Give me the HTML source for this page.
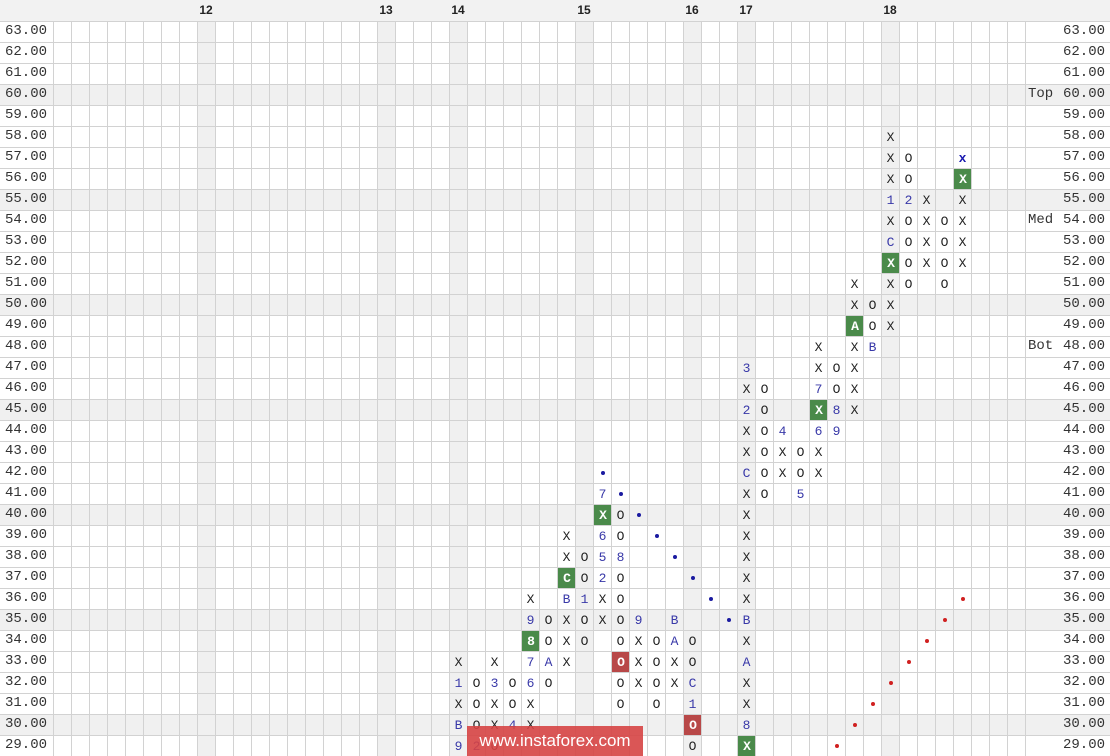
<!DOCTYPE html>
<html><head><meta charset="utf-8"><style>
*{margin:0;padding:0;box-sizing:border-box}
body{width:1110px;height:756px;overflow:hidden;background:#fff;position:relative;font-family:"Liberation Mono",monospace;color:#222}
.hdr{position:absolute;left:0;top:0;width:1110px;height:21px;background:#f2f2f2}
.hl{position:absolute;top:3px;font:bold 12px "Liberation Sans",sans-serif;width:18px;text-align:center}
.rs{position:absolute;left:0;width:1110px;height:21px;background:#f0f0f0}
.cs{position:absolute;top:21px;width:18px;height:735px;background:#f0f0f0}
.lines{position:absolute;left:0;top:21px;width:1110px;height:735px;
background-image:repeating-linear-gradient(to bottom,#d2d2d2 0,#d2d2d2 1px,transparent 1px,transparent 21px)}
.vl{position:absolute;left:53px;top:21px;width:973px;height:735px;
background-image:repeating-linear-gradient(to right,#d2d2d2 0,#d2d2d2 1px,transparent 1px,transparent 18px)}
.lab{position:absolute;font-size:14px;line-height:21px;height:21px;color:#333}
.g{position:absolute;left:53px;top:21px;width:972px;height:735px;display:grid;grid-template-columns:repeat(54,18px);grid-template-rows:repeat(35,21px)}
.g>div{display:flex;align-items:center;justify-content:center;font-size:13px;line-height:1;padding-left:1px;padding-top:1px}
.b{color:#3838a8}
.gr{background:#4a8a4a;color:#fff;font-weight:bold;margin:1px 0 0 1px}
.rd{background:#b84848;color:#fff;font-weight:bold;margin:1px 0 0 1px}
.d::after{content:"";width:4px;height:4px;border-radius:50%;background:#1a1aa0}
.r::after{content:"";width:4px;height:4px;border-radius:50%;background:#d02020}
.xb{color:#1a1ab0;font-weight:bold}
.wm{position:absolute;left:467px;top:726px;width:176px;height:30px;background:rgba(214,68,68,.9);color:#fff;font:17px "Liberation Sans",sans-serif;text-align:center;line-height:30px}
</style></head><body>
<div class="hdr"></div>
<div class="rs" style="top:84px"></div><div class="rs" style="top:189px"></div><div class="rs" style="top:294px"></div><div class="rs" style="top:399px"></div><div class="rs" style="top:504px"></div><div class="rs" style="top:609px"></div><div class="rs" style="top:714px"></div>
<div class="cs" style="left:197px"></div><div class="cs" style="left:377px"></div><div class="cs" style="left:449px"></div><div class="cs" style="left:575px"></div><div class="cs" style="left:683px"></div><div class="cs" style="left:737px"></div><div class="cs" style="left:881px"></div>
<div class="lines"></div><div class="vl"></div>
<div class="hl" style="left:197px">12</div><div class="hl" style="left:377px">13</div><div class="hl" style="left:449px">14</div><div class="hl" style="left:575px">15</div><div class="hl" style="left:683px">16</div><div class="hl" style="left:737px">17</div><div class="hl" style="left:881px">18</div>
<div class="lab" style="left:5px;top:21px">63.00<br>62.00<br>61.00<br>60.00<br>59.00<br>58.00<br>57.00<br>56.00<br>55.00<br>54.00<br>53.00<br>52.00<br>51.00<br>50.00<br>49.00<br>48.00<br>47.00<br>46.00<br>45.00<br>44.00<br>43.00<br>42.00<br>41.00<br>40.00<br>39.00<br>38.00<br>37.00<br>36.00<br>35.00<br>34.00<br>33.00<br>32.00<br>31.00<br>30.00<br>29.00</div>
<div class="lab" style="left:1063px;top:21px">63.00<br>62.00<br>61.00<br>60.00<br>59.00<br>58.00<br>57.00<br>56.00<br>55.00<br>54.00<br>53.00<br>52.00<br>51.00<br>50.00<br>49.00<br>48.00<br>47.00<br>46.00<br>45.00<br>44.00<br>43.00<br>42.00<br>41.00<br>40.00<br>39.00<br>38.00<br>37.00<br>36.00<br>35.00<br>34.00<br>33.00<br>32.00<br>31.00<br>30.00<br>29.00</div>
<div class="lab" style="left:1028px;top:84px">Top</div><div class="lab" style="left:1028px;top:210px">Med</div><div class="lab" style="left:1028px;top:336px">Bot</div>
<div class="g">
<div style="grid-column:23;grid-row:31">X</div><div class="b" style="grid-column:23;grid-row:32">1</div><div style="grid-column:23;grid-row:33">X</div><div class="b" style="grid-column:23;grid-row:34">B</div><div class="b" style="grid-column:23;grid-row:35">9</div>
<div style="grid-column:24;grid-row:32">O</div><div style="grid-column:24;grid-row:33">O</div><div style="grid-column:24;grid-row:34">O</div><div class="b" style="grid-column:24;grid-row:35">2</div>
<div style="grid-column:25;grid-row:31">X</div><div class="b" style="grid-column:25;grid-row:32">3</div><div style="grid-column:25;grid-row:33">X</div><div style="grid-column:25;grid-row:34">X</div><div style="grid-column:25;grid-row:35">O</div>
<div style="grid-column:26;grid-row:32">O</div><div style="grid-column:26;grid-row:33">O</div><div class="b" style="grid-column:26;grid-row:34">4</div>
<div style="grid-column:27;grid-row:28">X</div><div class="b" style="grid-column:27;grid-row:29">9</div><div class="gr" style="grid-column:27;grid-row:30">8</div><div class="b" style="grid-column:27;grid-row:31">7</div><div class="b" style="grid-column:27;grid-row:32">6</div><div style="grid-column:27;grid-row:33">X</div><div style="grid-column:27;grid-row:34">X</div>
<div style="grid-column:28;grid-row:29">O</div><div style="grid-column:28;grid-row:30">O</div><div class="b" style="grid-column:28;grid-row:31">A</div><div style="grid-column:28;grid-row:32">O</div>
<div style="grid-column:29;grid-row:25">X</div><div style="grid-column:29;grid-row:26">X</div><div class="gr" style="grid-column:29;grid-row:27">C</div><div class="b" style="grid-column:29;grid-row:28">B</div><div style="grid-column:29;grid-row:29">X</div><div style="grid-column:29;grid-row:30">X</div><div style="grid-column:29;grid-row:31">X</div>
<div style="grid-column:30;grid-row:26">O</div><div style="grid-column:30;grid-row:27">O</div><div class="b" style="grid-column:30;grid-row:28">1</div><div style="grid-column:30;grid-row:29">O</div><div style="grid-column:30;grid-row:30">O</div>
<div class="d" style="grid-column:31;grid-row:22"></div><div class="b" style="grid-column:31;grid-row:23">7</div><div class="gr" style="grid-column:31;grid-row:24">X</div><div class="b" style="grid-column:31;grid-row:25">6</div><div class="b" style="grid-column:31;grid-row:26">5</div><div class="b" style="grid-column:31;grid-row:27">2</div><div style="grid-column:31;grid-row:28">X</div><div style="grid-column:31;grid-row:29">X</div>
<div class="d" style="grid-column:32;grid-row:23"></div><div style="grid-column:32;grid-row:24">O</div><div style="grid-column:32;grid-row:25">O</div><div class="b" style="grid-column:32;grid-row:26">8</div><div style="grid-column:32;grid-row:27">O</div><div style="grid-column:32;grid-row:28">O</div><div style="grid-column:32;grid-row:29">O</div><div style="grid-column:32;grid-row:30">O</div><div class="rd" style="grid-column:32;grid-row:31">O</div><div style="grid-column:32;grid-row:32">O</div><div style="grid-column:32;grid-row:33">O</div>
<div class="d" style="grid-column:33;grid-row:24"></div><div class="b" style="grid-column:33;grid-row:29">9</div><div style="grid-column:33;grid-row:30">X</div><div style="grid-column:33;grid-row:31">X</div><div style="grid-column:33;grid-row:32">X</div>
<div class="d" style="grid-column:34;grid-row:25"></div><div style="grid-column:34;grid-row:30">O</div><div style="grid-column:34;grid-row:31">O</div><div style="grid-column:34;grid-row:32">O</div><div style="grid-column:34;grid-row:33">O</div>
<div class="d" style="grid-column:35;grid-row:26"></div><div class="b" style="grid-column:35;grid-row:29">B</div><div class="b" style="grid-column:35;grid-row:30">A</div><div style="grid-column:35;grid-row:31">X</div><div style="grid-column:35;grid-row:32">X</div>
<div class="d" style="grid-column:36;grid-row:27"></div><div style="grid-column:36;grid-row:30">O</div><div style="grid-column:36;grid-row:31">O</div><div class="b" style="grid-column:36;grid-row:32">C</div><div class="b" style="grid-column:36;grid-row:33">1</div><div class="rd" style="grid-column:36;grid-row:34">O</div><div style="grid-column:36;grid-row:35">O</div>
<div class="d" style="grid-column:37;grid-row:28"></div>
<div class="d" style="grid-column:38;grid-row:29"></div>
<div class="b" style="grid-column:39;grid-row:17">3</div><div style="grid-column:39;grid-row:18">X</div><div class="b" style="grid-column:39;grid-row:19">2</div><div style="grid-column:39;grid-row:20">X</div><div style="grid-column:39;grid-row:21">X</div><div class="b" style="grid-column:39;grid-row:22">C</div><div style="grid-column:39;grid-row:23">X</div><div style="grid-column:39;grid-row:24">X</div><div style="grid-column:39;grid-row:25">X</div><div style="grid-column:39;grid-row:26">X</div><div style="grid-column:39;grid-row:27">X</div><div style="grid-column:39;grid-row:28">X</div><div class="b" style="grid-column:39;grid-row:29">B</div><div style="grid-column:39;grid-row:30">X</div><div class="b" style="grid-column:39;grid-row:31">A</div><div style="grid-column:39;grid-row:32">X</div><div style="grid-column:39;grid-row:33">X</div><div class="b" style="grid-column:39;grid-row:34">8</div><div class="gr" style="grid-column:39;grid-row:35">X</div>
<div style="grid-column:40;grid-row:18">O</div><div style="grid-column:40;grid-row:19">O</div><div style="grid-column:40;grid-row:20">O</div><div style="grid-column:40;grid-row:21">O</div><div style="grid-column:40;grid-row:22">O</div><div style="grid-column:40;grid-row:23">O</div>
<div class="b" style="grid-column:41;grid-row:20">4</div><div style="grid-column:41;grid-row:21">X</div><div style="grid-column:41;grid-row:22">X</div>
<div style="grid-column:42;grid-row:21">O</div><div style="grid-column:42;grid-row:22">O</div><div class="b" style="grid-column:42;grid-row:23">5</div>
<div style="grid-column:43;grid-row:16">X</div><div style="grid-column:43;grid-row:17">X</div><div class="b" style="grid-column:43;grid-row:18">7</div><div class="gr" style="grid-column:43;grid-row:19">X</div><div class="b" style="grid-column:43;grid-row:20">6</div><div style="grid-column:43;grid-row:21">X</div><div style="grid-column:43;grid-row:22">X</div>
<div style="grid-column:44;grid-row:17">O</div><div style="grid-column:44;grid-row:18">O</div><div class="b" style="grid-column:44;grid-row:19">8</div><div class="b" style="grid-column:44;grid-row:20">9</div><div class="r" style="grid-column:44;grid-row:35"></div>
<div style="grid-column:45;grid-row:13">X</div><div style="grid-column:45;grid-row:14">X</div><div class="gr" style="grid-column:45;grid-row:15">A</div><div style="grid-column:45;grid-row:16">X</div><div style="grid-column:45;grid-row:17">X</div><div style="grid-column:45;grid-row:18">X</div><div style="grid-column:45;grid-row:19">X</div><div class="r" style="grid-column:45;grid-row:34"></div>
<div style="grid-column:46;grid-row:14">O</div><div style="grid-column:46;grid-row:15">O</div><div class="b" style="grid-column:46;grid-row:16">B</div><div class="r" style="grid-column:46;grid-row:33"></div>
<div style="grid-column:47;grid-row:6">X</div><div style="grid-column:47;grid-row:7">X</div><div style="grid-column:47;grid-row:8">X</div><div class="b" style="grid-column:47;grid-row:9">1</div><div style="grid-column:47;grid-row:10">X</div><div class="b" style="grid-column:47;grid-row:11">C</div><div class="gr" style="grid-column:47;grid-row:12">X</div><div style="grid-column:47;grid-row:13">X</div><div style="grid-column:47;grid-row:14">X</div><div style="grid-column:47;grid-row:15">X</div><div class="r" style="grid-column:47;grid-row:32"></div>
<div style="grid-column:48;grid-row:7">O</div><div style="grid-column:48;grid-row:8">O</div><div class="b" style="grid-column:48;grid-row:9">2</div><div style="grid-column:48;grid-row:10">O</div><div style="grid-column:48;grid-row:11">O</div><div style="grid-column:48;grid-row:12">O</div><div style="grid-column:48;grid-row:13">O</div><div class="r" style="grid-column:48;grid-row:31"></div>
<div style="grid-column:49;grid-row:9">X</div><div style="grid-column:49;grid-row:10">X</div><div style="grid-column:49;grid-row:11">X</div><div style="grid-column:49;grid-row:12">X</div><div class="r" style="grid-column:49;grid-row:30"></div>
<div style="grid-column:50;grid-row:10">O</div><div style="grid-column:50;grid-row:11">O</div><div style="grid-column:50;grid-row:12">O</div><div style="grid-column:50;grid-row:13">O</div><div class="r" style="grid-column:50;grid-row:29"></div>
<div class="xb" style="grid-column:51;grid-row:7">x</div><div class="gr" style="grid-column:51;grid-row:8">X</div><div style="grid-column:51;grid-row:9">X</div><div style="grid-column:51;grid-row:10">X</div><div style="grid-column:51;grid-row:11">X</div><div style="grid-column:51;grid-row:12">X</div><div class="r" style="grid-column:51;grid-row:28"></div>
</div>
<div class="wm">www.instaforex.com</div>
</body></html>
